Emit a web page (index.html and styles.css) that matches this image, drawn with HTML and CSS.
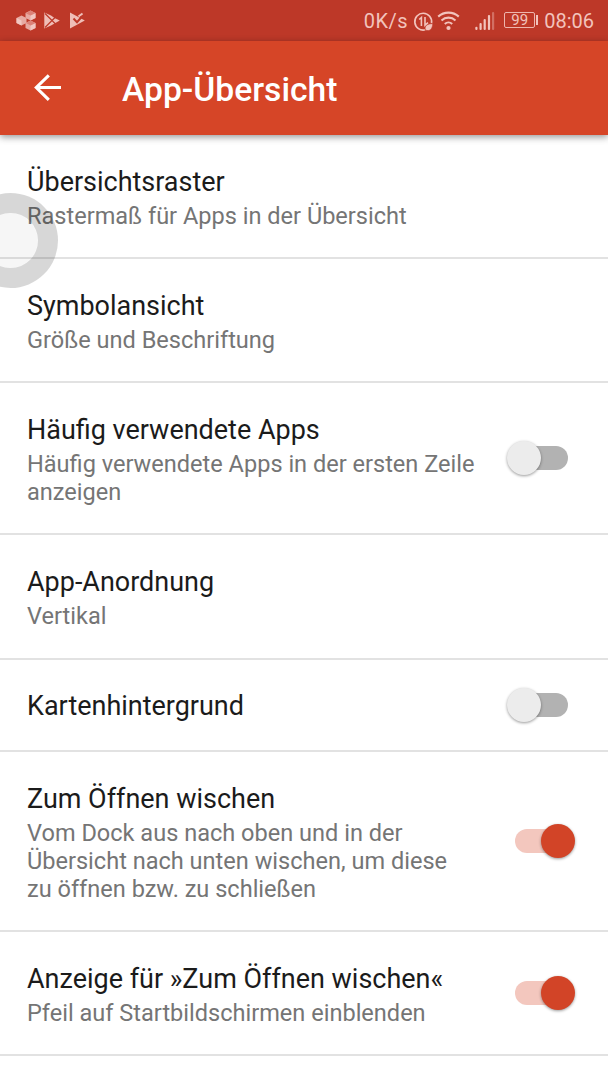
FILE: index.html
```html
<!DOCTYPE html>
<html lang="de">
<head>
<meta charset="utf-8">
<title>App-Übersicht</title>
<link rel="stylesheet" href="styles.css">
</head>
<body>
<div class="statusbar">
  <svg class="notifications" width="90" height="40" viewBox="0 0 90 40">
    <g fill="#e7aaa2">
      <path d="M21.500 15.500l5 2.500v5l-5 2.500l-5-2.500v-5z"/>
      <path d="M30.500 10.500l5 2.500v5l-5 2.500l-5-2.500v-5z"/>
      <path d="M30.500 20.500l5 2.500v5l-5 2.500l-5-2.500v-5z"/>
    </g>
    <g fill="#f2c7c1">
      <path d="M16.500 18l5 2.500v5l-5-2.500z"/>
      <path d="M30.500 15.500l5-2.500v5l-5 2.500z"/>
      <path d="M30.500 25.500l5-2.500v5l-5 2.500z"/>
    </g>
    <g fill="#dc8177">
      <path d="M26 13.500l4.500-3l5 2.500l-5 2.500z"/>
      <path d="M26 23l4.500-2.500l5 2.500l-5 2.500z"/>
    </g>
    <path fill="#efbeb7" d="M44.300 12.500L51 15.500L54.500 18L59.800 20.500L54.500 23.500L51 25.500L44.300 28.500z"/>
    <path fill="none" stroke="#bd3828" stroke-width="1.200" d="M45 13.500l10.500 10.500M45 27.500l10.500-10.500"/>
    <path fill="#efbeb7" d="M70 12.500L84.800 20.500L70 28.500z"/>
    <path fill="none" stroke="#efbeb7" stroke-width="2" d="M78.500 16.500l4-3"/>
    <path fill="none" stroke="#bd3828" stroke-width="2" d="M73.500 18.500l3.500 3.700l5-5.700"/>
  </svg>
  <div class="status-right">
    <span class="speed">0K/s</span>
    <svg class="status-icons" width="84" height="40" viewBox="412 0 84 40">
      <g fill="none" stroke="#f2c3bc">
        <path stroke-width="1.700" d="M425.300 28.800A8.400 8.400 0 1 1 431.500 22"/>
        <path stroke-width="1.600" d="M419.200 18.500l2.200-2v8.500M425 16v8.200l3-2.500"/>
        <path stroke-width="2.100" d="M438.200 16.300a15.300 15.300 0 0 1 20.600 0M441.500 20.100a10.300 10.300 0 0 1 14 0M444.800 23.700a5.400 5.400 0 0 1 7.400 0" transform="translate(0 -.7)"/>
      </g>
      <path fill="#f2c3bc" stroke="#bd3828" stroke-width=".6" d="M425.300 29c-1-4.500 2-6 7.400-6.500c0 5-2.700 8.500-7.400 6.500z"/>
      <circle cx="448.500" cy="27" r="2.100" fill="#f2c3bc"/>
      <g fill="#f2c3bc">
        <rect x="475.300" y="25.800" width="2.200" height="3.200" rx="1"/>
        <rect x="479.500" y="22" width="2.200" height="7" rx="1"/>
        <rect x="483.600" y="18" width="2.200" height="11" rx="1"/>
        <rect x="487.900" y="14" width="2.200" height="15" rx="1"/>
        <rect x="492" y="11" width="2.200" height="18" rx="1" opacity=".4"/>
      </g>
    </svg>
    <span class="battery">99</span>
    <span class="battery-tip"></span>
    <span class="clock">08:06</span>
  </div>
</div>
<header class="toolbar">
  <svg class="back" width="28" height="28" viewBox="0 0 28 28"><path fill="none" stroke="#fff" stroke-width="3.100" d="M27 13.500H3M14.800 1.300L2.300 13.500l12.500 12.300"/></svg>
  <h1 class="heading">App-Übersicht</h1>
</header>
<main class="list">
  <section class="row">
    <div class="text"><div class="title">Übersichtsraster</div><div class="summary">Rastermaß für Apps in der Übersicht</div></div>
  </section>
  <section class="row">
    <div class="text"><div class="title">Symbolansicht</div><div class="summary">Größe und Beschriftung</div></div>
  </section>
  <section class="row">
    <div class="text"><div class="title">Häufig verwendete Apps</div><div class="summary">Häufig verwendete Apps in der ersten Zeile<br>anzeigen</div></div>
    <div class="switch"><span class="thumb"></span></div>
  </section>
  <section class="row">
    <div class="text"><div class="title">App-Anordnung</div><div class="summary">Vertikal</div></div>
  </section>
  <section class="row">
    <div class="text"><div class="title">Kartenhintergrund</div></div>
    <div class="switch"><span class="thumb"></span></div>
  </section>
  <section class="row">
    <div class="text"><div class="title">Zum Öffnen wischen</div><div class="summary">Vom Dock aus nach oben und in der<br>Übersicht nach unten wischen, um diese<br>zu öffnen bzw. zu schließen</div></div>
    <div class="switch on"><span class="thumb"></span></div>
  </section>
  <section class="row">
    <div class="text"><div class="title">Anzeige für »Zum Öffnen wischen«</div><div class="summary">Pfeil auf Startbildschirmen einblenden</div></div>
    <div class="switch on"><span class="thumb"></span></div>
  </section>
</main>
<div class="assist"></div>
</body>
</html>
```
FILE: styles.css
```css
* { box-sizing: border-box; }
html, body { height: 100%; }
body {
  margin: 0;
  background: #fff;
  font-family: Roboto, sans-serif;
  overflow: hidden;
}
.statusbar {
  height: 40.5px;
  background: #bd3828;
  color: #f2c3bc;
  display: flex;
  justify-content: space-between;
}
.notifications { flex: none; }
.status-right {
  display: flex;
  align-items: center;
  height: 41px;
  padding-right: 14px;
}
.speed, .clock { font-size: 20px; line-height: 40px; white-space: nowrap; }
.speed { letter-spacing: .5px; margin-right: 4px; }
.status-icons { flex: none; margin-right: 8px; }
.battery {
  width: 31px;
  height: 16px;
  margin-top: -1px;
  border: 1px solid #eeb5ad;
  border-radius: 2px;
  font-size: 15px;
  line-height: 14.500px;
  text-align: center;
}
.battery-tip { width: 2px; height: 10px; margin: -1px 6px 0 1px; background: #f2c3bc; }
.toolbar {
  position: relative;
  height: 94.500px;
  padding-left: 33.500px;
  background: #d64527;
  box-shadow: 0 2px 7px rgba(0, 0, 0, .42);
  display: flex;
  align-items: center;
  gap: 60.500px;
}
.heading {
  margin: 3.500px 0 0;
  color: #fff;
  font-size: 33.650px;
  font-weight: 500;
  line-height: 40px;
}
.row {
  display: flex;
  justify-content: space-between;
  align-items: center;
  padding: 30.800px 32px 27.600px 27px;
  border-bottom: 2px solid #e2e2e2;
}
.row:first-child { padding-top: 30.600px; }
.text { white-space: nowrap; }
.title { color: #1b1b1b; font-size: 26.980px; line-height: 32px; }
.summary { margin: 5.300px 0 -1.100px; color: #757575; font-size: 23.550px; line-height: 27.700px; }
.switch {
  display: flex;
  align-items: center;
  width: 53px;
  height: 24px;
  margin: -3px 8.500px 0 0;
  border-radius: 12px;
  background: #b2b2b2;
}
.thumb {
  flex: none;
  width: 34px;
  height: 34px;
  margin-left: -7.500px;
  border-radius: 50%;
  background: #ececec;
  box-shadow: 0 1px 3px rgba(0, 0, 0, .4);
}
.switch.on { background: #f3c7be; justify-content: flex-end; }
.switch.on .thumb { margin-right: -7px; background: #d24427; }
.assist {
  position: absolute;
  left: -37px;
  top: 193px;
  width: 95px;
  height: 95px;
  border: 20px solid rgba(0, 0, 0, .155);
  border-radius: 50%;
  background: rgba(0, 0, 0, .035);
  background-clip: padding-box;
}
```
